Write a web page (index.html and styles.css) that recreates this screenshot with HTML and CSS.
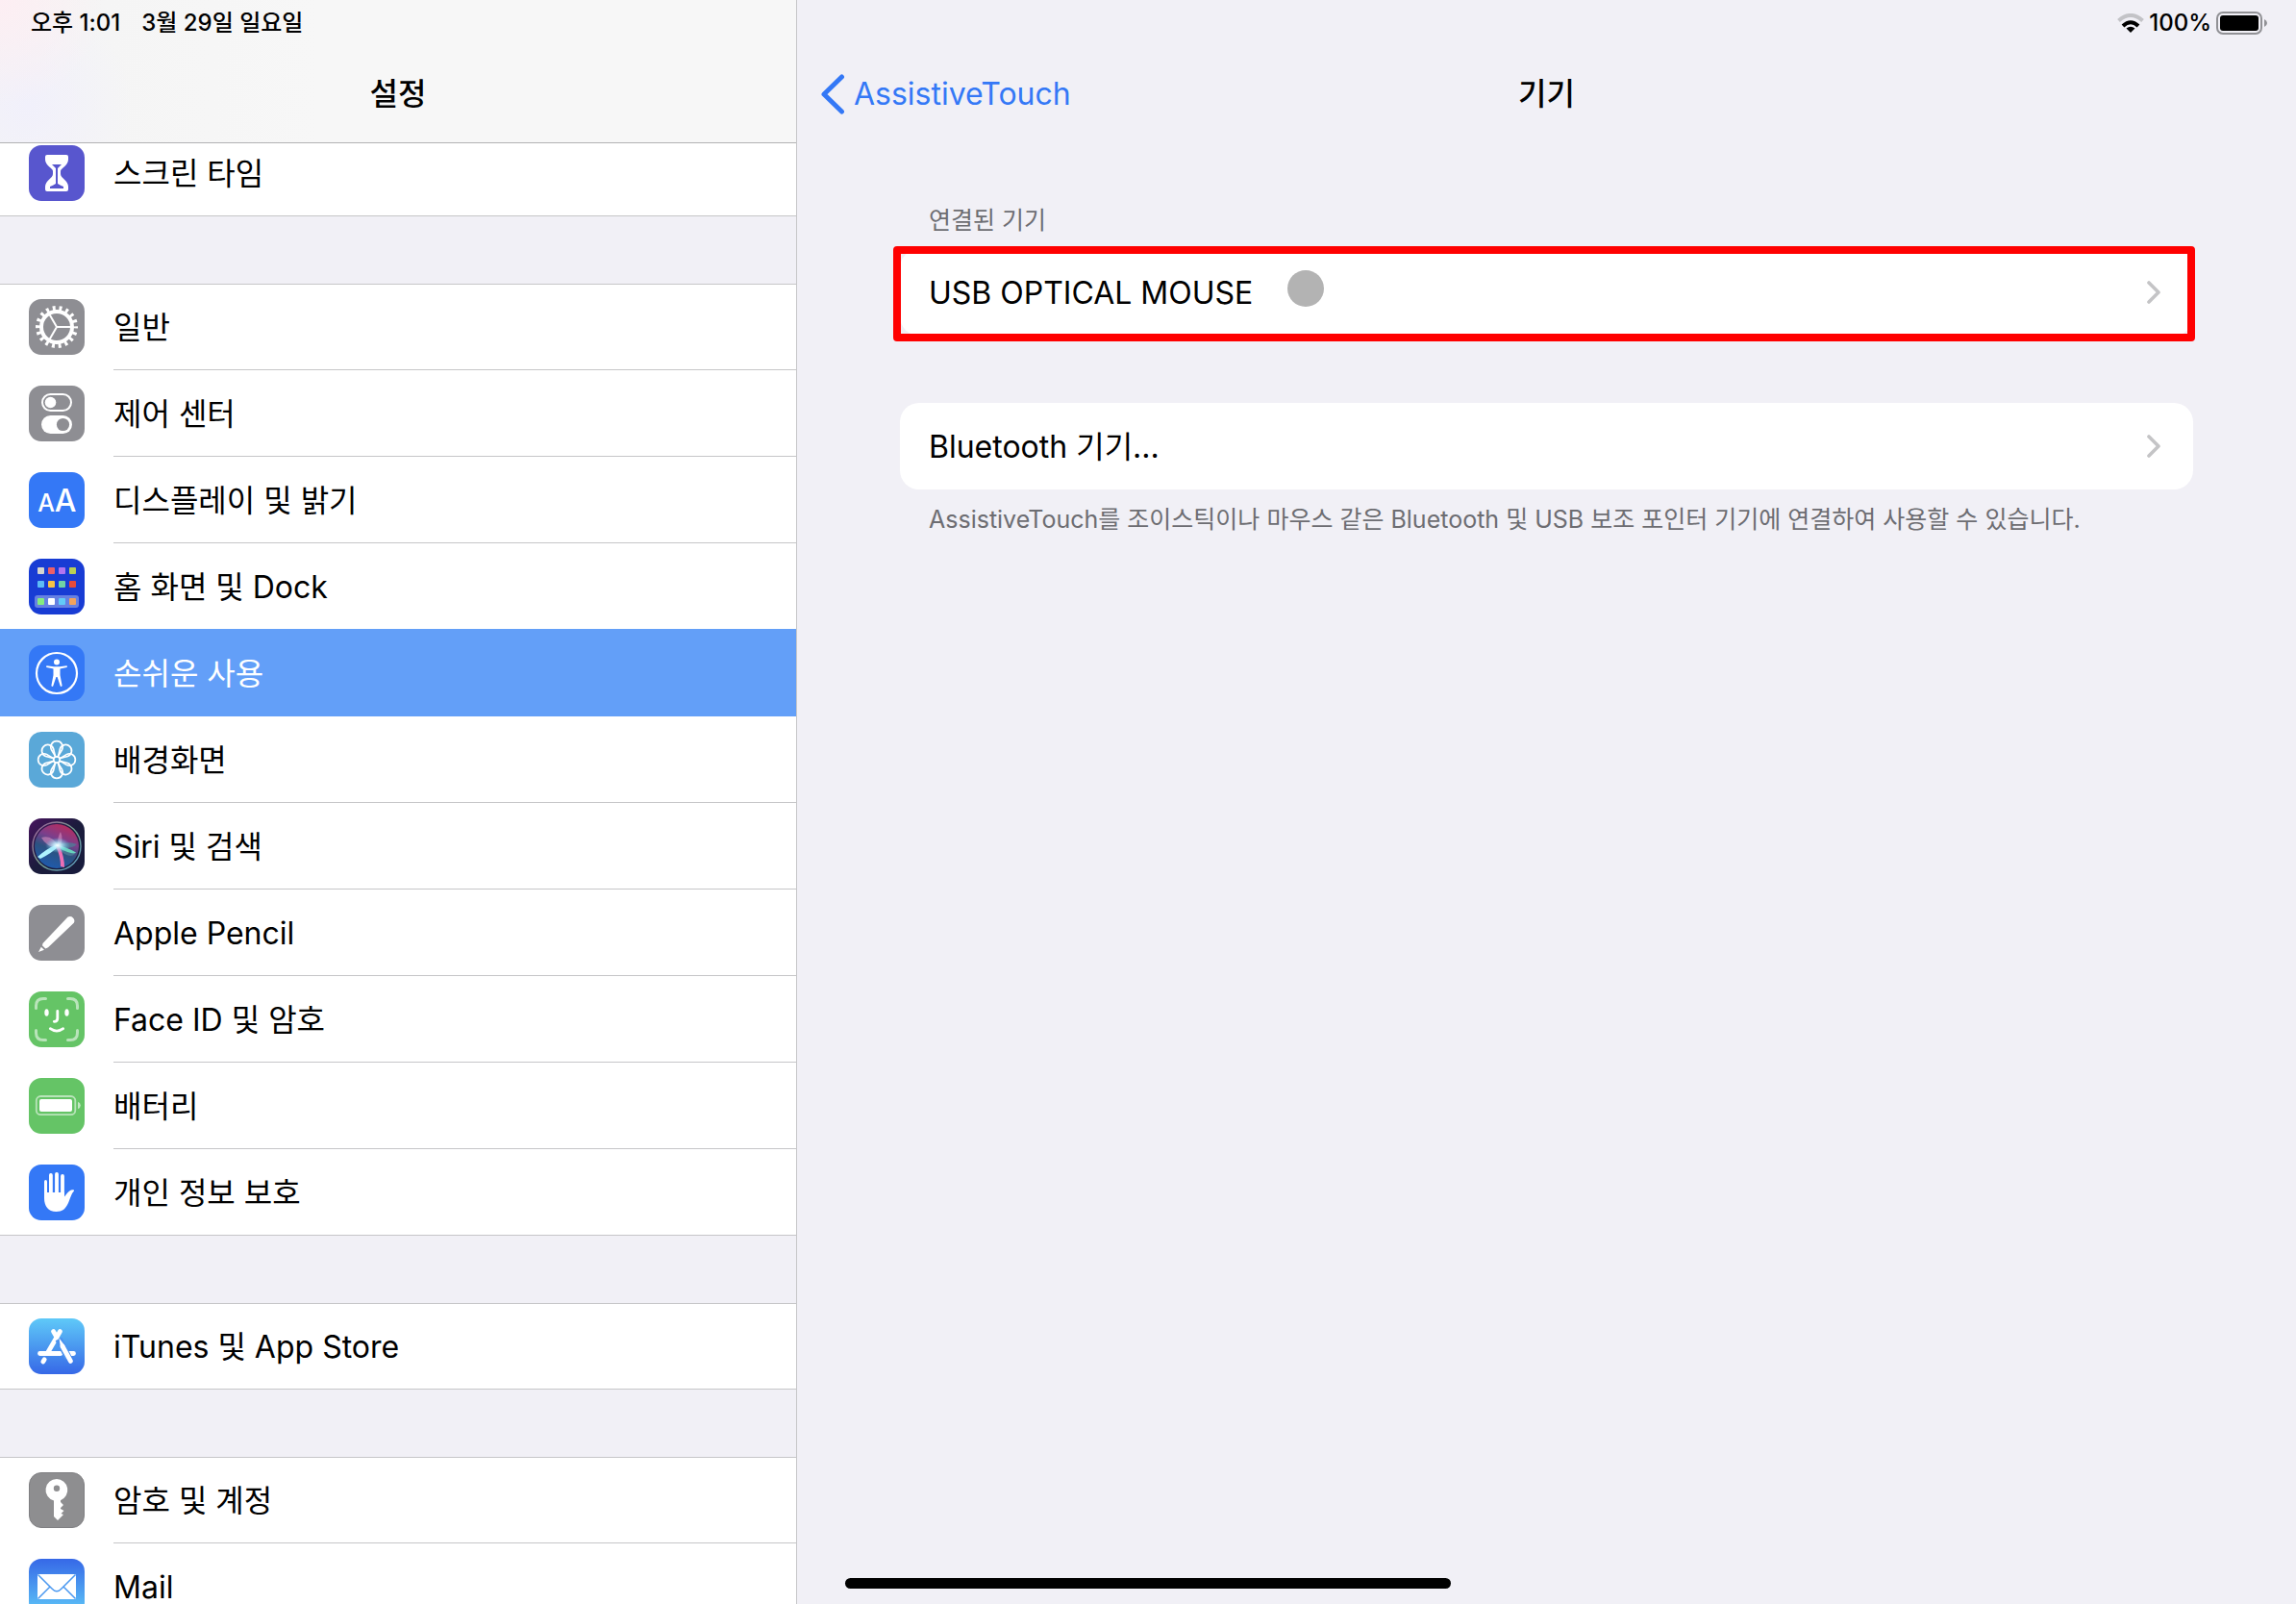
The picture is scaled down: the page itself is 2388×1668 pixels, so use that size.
FILE: index.html
```html
<!DOCTYPE html>
<html lang="ko">
<head>
<meta charset="utf-8">
<meta name="viewport" content="width=device-width, initial-scale=1">
<title>설정</title>
<link rel="stylesheet" href="styles.css">
</head>
<body>
<div class="app">
  <aside class="sidebar">
    <header class="sidebar-header">
      <div class="status"><span>오후 1:01</span><span>3월 29일 일요일</span></div>
      <h1 class="title">설정</h1>
    </header>
    <nav class="menu">
      <ul class="group">
        <li><a class="row" href="#screen-time">
          <svg class="icon" viewBox="0 0 58 58"><rect width="58" height="58" rx="13" fill="#5856ce"/><path fill="#fff" d="M19 10H39Q41 10 41 12V15C41 21 33 24 33 27V30C33 34 41 37 41 43V46Q41 48 39 48H19Q17 48 17 46V43C17 37 25 34 25 30V27C25 24 17 21 17 15V12Q17 10 19 10Z"/><path fill="#5856ce" d="M24 20H34L30 24V40Q33 42 36 43V45H22V43Q25 42 28 40V24Z"/><path stroke="#fff" stroke-width="1" d="M27.500 25V39M30.500 25V39"/></svg>
          <span class="label">스크린 타임</span></a></li>
      </ul>
      <ul class="group">
        <li><a class="row" href="#general">
          <svg class="icon" viewBox="0 0 58 58"><rect width="58" height="58" rx="13" fill="#8e8e93"/><g fill="none" stroke="#fff"><circle cx="29" cy="29" r="16" stroke-width="4"/><circle cx="29" cy="29" r="19.5" stroke-width="5" stroke-dasharray="2.9 3.907" stroke-dashoffset="1.45"/><path stroke-width="2" d="M29 29H44M29 29L21.500 16M29 29L21.500 42"/></g></svg>
          <span class="label">일반</span></a></li>
        <li><a class="row" href="#control-center">
          <svg class="icon" viewBox="0 0 58 58"><rect width="58" height="58" rx="13" fill="#8e8e93"/><rect x="14" y="9" width="30" height="17" rx="8.500" fill="none" stroke="#fff" stroke-width="2"/><circle cx="22.500" cy="17.500" r="5.800" fill="#fff"/><rect x="13" y="31" width="32" height="19" rx="9.500" fill="#fff"/><circle cx="35.500" cy="40.500" r="6.600" fill="#8e8e93"/></svg>
          <span class="label">제어 센터</span></a></li>
        <li><a class="row" href="#display">
          <svg class="icon" viewBox="0 0 58 58"><rect width="58" height="58" rx="13" fill="#3478f6"/><g class="glyph-text" fill="#fff" text-anchor="middle"><text x="18" y="41" font-size="25">A</text><text x="38" y="41" font-size="32">A</text></g></svg>
          <span class="label">디스플레이 및 밝기</span></a></li>
        <li><a class="row" href="#home-dock">
          <svg class="icon" viewBox="0 0 58 58"><rect width="58" height="58" rx="13" fill="#183cd4"/><rect x="6" y="38" width="46" height="13" rx="3" fill="#6680e2"/><g><rect x="9" y="9" width="7" height="7" rx="1" fill="#d5d5d0"/><rect x="20" y="9" width="7" height="7" rx="1" fill="#ec5f67"/><rect x="31" y="9" width="7" height="7" rx="1" fill="#b174f0"/><rect x="42" y="9" width="7" height="7" rx="1" fill="#b9cf55"/><rect x="9" y="23" width="7" height="7" rx="1" fill="#5cbcf6"/><rect x="20" y="23" width="7" height="7" rx="1" fill="#f7c245"/><rect x="31" y="23" width="7" height="7" rx="1" fill="#70d3a5"/><rect x="42" y="23" width="7" height="7" rx="1" fill="#e64b3b"/><rect x="9" y="41" width="7" height="7" rx="1" fill="#85ec7f"/><rect x="20" y="41" width="7" height="7" rx="1" fill="#fff"/><rect x="31" y="41" width="7" height="7" rx="1" fill="#62cbf8"/><rect x="42" y="41" width="7" height="7" rx="1" fill="#f1a25c"/></g></svg>
          <span class="label">홈 화면 및 Dock</span></a></li>
        <li><a class="row selected" href="#accessibility" aria-current="page">
          <svg class="icon" viewBox="0 0 58 58"><rect width="58" height="58" rx="13" fill="#3478f6"/><circle cx="29" cy="29" r="21" fill="none" stroke="#fff" stroke-width="2.200"/><circle cx="29" cy="17.600" r="3" fill="#fff"/><path fill="#fff" d="M18.500 21.200L26 22.200H32L39.500 21.200Q40.500 22.200 39.500 23L32.500 24.500V31L34.600 42Q34 43.400 32.800 42.600L29.600 33H28.400L25.200 42.600Q24 43.400 23.400 42L25.500 31V24.500L18.500 23Q17.500 22.200 18.500 21.200Z"/></svg>
          <span class="label">손쉬운 사용</span></a></li>
        <li><a class="row" href="#wallpaper">
          <svg class="icon" viewBox="0 0 58 58"><defs><path id="petal" d="M28 26L23.400 18.500A6.200 6.200 0 1 1 34.600 18.500L30 26"/></defs><rect width="58" height="58" rx="13" fill="#5aa8d8"/><g fill="none" stroke="#fff" stroke-width="1.700"><circle cx="29" cy="29" r="3.200"/><use href="#petal"/><use href="#petal" transform="rotate(45 29 29)"/><use href="#petal" transform="rotate(90 29 29)"/><use href="#petal" transform="rotate(135 29 29)"/><use href="#petal" transform="rotate(180 29 29)"/><use href="#petal" transform="rotate(225 29 29)"/><use href="#petal" transform="rotate(270 29 29)"/><use href="#petal" transform="rotate(315 29 29)"/></g></svg>
          <span class="label">배경화면</span></a></li>
        <li><a class="row" href="#siri">
          <svg class="icon" viewBox="0 0 58 58"><defs><linearGradient id="siri-bg" x1="0" y1="0" x2="1" y2="1"><stop offset="0" stop-color="#47145e"/><stop offset=".5" stop-color="#1b1c3c"/><stop offset="1" stop-color="#171b3c"/></linearGradient><linearGradient id="siri-orb" x1=".7" y1="0" x2=".3" y2="1"><stop offset="0" stop-color="#b92b5d"/><stop offset=".35" stop-color="#7b3f8c"/><stop offset=".6" stop-color="#2c5280"/><stop offset="1" stop-color="#1e5bb0"/></linearGradient><linearGradient id="siri-ring" x1="0" y1="0" x2="1" y2="1"><stop offset="0" stop-color="#a25c9e"/><stop offset=".5" stop-color="#77a08f"/><stop offset="1" stop-color="#5a9cc6"/></linearGradient><radialGradient id="siri-glow"><stop offset="0" stop-color="#fff"/><stop offset=".3" stop-color="#c4f3ff" stop-opacity=".85"/><stop offset="1" stop-color="#61c8ed" stop-opacity="0"/></radialGradient></defs><rect width="58" height="58" rx="13" fill="url(#siri-bg)"/><circle cx="29" cy="29" r="23" fill="url(#siri-orb)"/><circle cx="29" cy="29" r="25" fill="none" stroke="url(#siri-ring)" stroke-width="1.400"/><path fill="#d98cc0" opacity=".6" d="M13 20Q24 17 30 28Q30 18 33 14Q37 23 31 30Q19 31 13 20Z"/><path fill="#4b8398" opacity=".7" d="M30 28Q41 23 50 27Q46 32 31 31L48 37Q41 43 29 30Z"/><path fill="#6cebc8" opacity=".85" d="M30 28Q40 30 49 35.500Q47 39 29 30Z"/><path fill="#aef3ff" d="M29 27Q18 32 9 40L12 42Q24 36 31 29Z"/><path fill="#ed6fb5" d="M28 29Q33 39 33 50L37 51Q37 40 32 29Z"/><ellipse cx="30" cy="28" rx="13" ry="8" fill="url(#siri-glow)"/></svg>
          <span class="label">Siri 및 검색</span></a></li>
        <li><a class="row" href="#pencil">
          <svg class="icon" viewBox="0 0 58 58"><rect width="58" height="58" rx="13" fill="#8e8e93"/><path fill="#fff" d="M14.500 40L40.600 12.600A4.600 4.600 0 0 1 46.800 18.800L20 44.300L17.300 45.400L14 42.200ZM12.800 43.800L16 46.700L10 49Z"/></svg>
          <span class="label">Apple Pencil</span></a></li>
        <li><a class="row" href="#face-id">
          <svg class="icon" viewBox="0 0 58 58"><rect width="58" height="58" rx="13" fill="#65c466"/><g fill="none" stroke="#fff" stroke-linecap="round" stroke-width="3"><path opacity=".55" d="M7.500 17.500V15Q7.500 7.500 15 7.500H17.500M40.500 7.500H43Q50.500 7.500 50.500 15V17.500M50.500 40.500V43Q50.500 50.500 43 50.500H40.500M17.500 50.500H15Q7.500 50.500 7.500 43V40.500"/><path stroke-width="2.800" d="M29.800 20.500V28Q29.800 31.300 26.300 31.300M22.300 38.700Q29 43.500 35.700 38.700"/></g><ellipse cx="18.500" cy="22" rx="2.200" ry="3.800" fill="#fff"/><ellipse cx="39.500" cy="22" rx="2.200" ry="3.800" fill="#fff"/></svg>
          <span class="label">Face ID 및 암호</span></a></li>
        <li><a class="row" href="#battery">
          <svg class="icon" viewBox="0 0 58 58"><rect width="58" height="58" rx="13" fill="#65c466"/><rect x="7.800" y="19" width="40.500" height="19.200" rx="4.500" fill="none" stroke="#fff" stroke-width="1.800" opacity=".55"/><rect x="11" y="22" width="34" height="13" rx="2" fill="#fff"/><path fill="#fff" opacity=".6" d="M51 24.800Q53.800 26 53.800 28.500T51 32.200Z"/></svg>
          <span class="label">배터리</span></a></li>
        <li><a class="row" href="#privacy">
          <svg class="icon" viewBox="0 0 58 58"><rect width="58" height="58" rx="13" fill="#3478f6"/><g stroke="#fff" stroke-linecap="round" fill="none"><path stroke-width="3" d="M17.500 17.500V32"/><path stroke-width="3.800" d="M22.900 11V32M29 10V32M35 12V32"/></g><path fill="#fff" d="M16 29H37V33.500C39 31 41 27.500 44 26.500Q47.500 25.600 47 27.400C44 30 43 36 40.500 41C38 46 35 49 28.500 49C20 49 16 43 16 35Z"/></svg>
          <span class="label">개인 정보 보호</span></a></li>
      </ul>
      <ul class="group">
        <li><a class="row" href="#store">
          <svg class="icon" viewBox="0 0 58 58"><defs><linearGradient id="sky" x1="0" y1="0" x2="0" y2="1"><stop offset="0" stop-color="#5fc9f8"/><stop offset="1" stop-color="#3668e7"/></linearGradient></defs><rect width="58" height="58" rx="13" fill="url(#sky)"/><g fill="none" stroke-linecap="round"><path stroke="#fff" stroke-width="4.800" d="M11.500 36.500H33M41 36.500H46.500M25.500 13.500L29 19.500M16.200 42.800L14.800 45"/><path stroke="#fff" stroke-width="4.800" d="M32.500 13.500L20 35"/><path stroke="#4a92ef" stroke-width="7.500" stroke-linecap="butt" d="M31 21.500L41 41"/><path stroke="#fff" stroke-width="4.800" d="M43.500 44.500L35 29"/><path fill="#fff" stroke="none" d="M31.500 20.500L37.500 28.500L33 31Z"/></g></svg>
          <span class="label">iTunes 및 App Store</span></a></li>
      </ul>
      <ul class="group">
        <li><a class="row" href="#accounts">
          <svg class="icon" viewBox="0 0 58 58"><rect x=".5" y=".5" width="57" height="57" rx="12.500" fill="#8e8e90" stroke="#7f7f82"/><path fill="#fff" fill-rule="evenodd" d="M29 7A11.500 11.500 0 0 1 33 29.200V31L36 34L33 37V38L36.500 40L33.500 43L36 44L30 50L26 46V29.600A11.500 11.500 0 0 1 29 7ZM29 13.500A3.200 3.200 0 1 0 29 19.900A3.200 3.200 0 1 0 29 13.500Z"/></svg>
          <span class="label">암호 및 계정</span></a></li>
        <li><a class="row" href="#mail">
          <svg class="icon" viewBox="0 0 58 58"><defs><linearGradient id="dusk" x1="0" y1="0" x2="0" y2="1"><stop offset="0" stop-color="#3668e7"/><stop offset="1" stop-color="#5fc9f8"/></linearGradient></defs><rect width="58" height="58" rx="13" fill="url(#dusk)"/><rect x="9" y="16" width="40" height="26" rx="1" fill="#fff"/><path fill="none" stroke="#4a98f0" stroke-width="1.500" d="M9.500 16.500L24 31Q29 36.500 34 31L48.500 16.500M9.500 41.500L21.500 29.500M48.500 41.500L36.500 29.500"/></svg>
          <span class="label">Mail</span></a></li>
      </ul>
    </nav>
  </aside>

  <main class="detail">
    <div class="status status-end">
      <svg class="wifi" viewBox="0 0 28 20" role="img" aria-label="Wi-Fi"><g fill="none"><path stroke="#c3c3c7" stroke-width="4" d="M1.500 7.500Q14 -3.500 26.500 7.500"/><path stroke="#000" stroke-width="4" d="M6 13Q14 5.500 22 13"/></g><path d="M9.500 15.500Q14 12 18.500 15.500L14 20Z"/></svg>
      <span>100%</span>
      <svg class="cell" viewBox="0 0 54 24" role="img" aria-label="배터리"><rect x="1" y="1" width="46" height="22" rx="6" fill="none" stroke="#919195" stroke-width="2"/><rect x="4" y="4" width="40" height="16" rx="3"/><path fill="#919195" d="M50 8Q53 9.500 53 12T50 16Z"/></svg>
    </div>
    <header class="navbar">
      <a class="back" href="#assistive-touch"><svg class="back-arrow" viewBox="0 0 26 42"><path fill="none" stroke="#3478f6" stroke-width="5" stroke-linecap="round" stroke-linejoin="round" d="M22.500 3L4 21L22.500 39"/></svg>AssistiveTouch</a>
      <h2 class="title">기기</h2>
    </header>
    <div class="content">
      <section>
        <h3 class="note">연결된 기기</h3>
        <div class="card marked">
          <a class="cell-row" href="#usb-mouse"><span>USB OPTICAL MOUSE</span><svg class="chevron" viewBox="0 0 14 24"><path fill="none" stroke="#c4c4c6" stroke-width="3.600" stroke-linecap="round" stroke-linejoin="round" d="M2 2L12 12L2 22"/></svg></a>
          <span class="pointer"></span>
        </div>
      </section>
      <section>
        <div class="card">
          <a class="cell-row" href="#bluetooth"><span>Bluetooth 기기...</span><svg class="chevron" viewBox="0 0 14 24"><path fill="none" stroke="#c4c4c6" stroke-width="3.600" stroke-linecap="round" stroke-linejoin="round" d="M2 2L12 12L2 22"/></svg></a>
        </div>
        <p class="note">AssistiveTouch를 조이스틱이나 마우스 같은 Bluetooth 및 USB 보조 포인터 기기에 연결하여 사용할 수 있습니다.</p>
      </section>
    </div>
  </main>
  <div class="home-bar"></div>
</div>
</body>
</html>
```
FILE: styles.css
```css
* { box-sizing: border-box; }

body {
  margin: 0;
  background: #f1f0f6;
  color: #000;
  font-family: Inter, "Noto Sans CJK KR", sans-serif;
  font-size: 32px;
  line-height: 40px;
}

a { color: inherit; text-decoration: none; }
h1, h2, h3, p, ul { margin: 0; padding: 0; }
ul { list-style: none; }
svg { display: block; flex: none; }

.app {
  position: relative;
  display: grid;
  grid-template-columns: minmax(320px, 829fr) minmax(0, 1559fr);
  height: 100vh;
  overflow: hidden;
}

.status {
  display: flex;
  align-items: center;
  gap: 22px;
  height: 48px;
  padding: 0 32px;
  font-size: 24px;
  font-weight: 500;
  line-height: 48px;
}

.status-end {
  justify-content: flex-end;
  gap: 5px;
  padding: 0 29px;
}

.wifi { width: 28px; height: 20px; }
.cell { width: 54px; height: 24px; }

.title {
  font-size: 32px;
  font-weight: 500;
  line-height: 40px;
  text-align: center;
}

/* Sidebar */
.sidebar {
  display: flex;
  flex-direction: column;
  min-height: 0;
  border-right: 1px solid #c6c6c8;
}

.sidebar-header {
  z-index: 1;
  flex: none;
  height: 149px;
  border-bottom: 1px solid #b2b2b4;
  background:
    radial-gradient(circle at 0 0, #fdeef3, rgba(253, 238, 243, 0) 110px),
    radial-gradient(circle at 30px 110px, #f1f0fb, rgba(241, 240, 251, 0) 110px),
    linear-gradient(90deg, #f4f4f4, #f7f7f7 40%);
}

.sidebar-header .title { padding-top: 30px; }

/* The list is scrolled slightly beneath the header */
.menu {
  display: flex;
  flex-direction: column;
  gap: 70px;
  min-height: 0;
  margin-top: -14px;
}

.group {
  flex: none;
  background: #fff;
  box-shadow: inset 0 1px #c6c6c8, inset 0 -1px #c6c6c8;
}

.row {
  display: flex;
  align-items: stretch;
  gap: 30px;
  height: 90px;
  padding-left: 30px;
}

.row .icon { width: 58px; height: 58px; margin-top: 16px; }

.row .label {
  flex: 1;
  padding: 26px 0 23px;
  border-bottom: 1px solid #c6c6c8;
  white-space: nowrap;
}

/* Positioned so that its fill covers the separator above */
.row.selected {
  position: relative;
  background: #639ff8;
  box-shadow: 0 -1px #639ff8;
  color: #fff;
}

.row.selected .label, .group li:last-child .label { border-color: transparent; }

.glyph-text { font-family: Inter, sans-serif; font-weight: 500; }

/* Detail pane */
.detail { min-width: 0; }

.navbar {
  display: grid;
  grid-template-columns: 1fr auto 1fr;
  align-items: center;
  height: 100px;
  padding: 0 24px;
}

.back {
  display: flex;
  align-items: center;
  gap: 9px;
  color: #3478f6;
}

.back-arrow { width: 26px; height: 42px; }

.content {
  display: flex;
  flex-direction: column;
  gap: 70px;
  padding: 65px 107px 0;
}

.note {
  padding: 0 30px;
  color: #6d6d72;
  font-size: 25px;
  font-weight: 400;
  line-height: 32px;
}

h3.note { padding-bottom: 14px; }
p.note { padding-top: 15px; }

.card {
  position: relative;
  border-radius: 20px;
  background: #fff;
}

.cell-row {
  display: flex;
  align-items: center;
  justify-content: space-between;
  height: 90px;
  padding: 0 34px 0 30px;
}

.cell-row span { padding-top: 2px; }

.chevron { width: 14px; height: 24px; }

.marked::after {
  content: "";
  position: absolute;
  inset: -3px -2px -6px -7px;
  border: 8px solid #f00;
  border-radius: 4px;
}

.pointer {
  position: absolute;
  top: 22px;
  left: 403px;
  width: 38px;
  height: 38px;
  border-radius: 50%;
  background: #b3b3b3;
}

.home-bar {
  position: absolute;
  bottom: 16px;
  left: 50%;
  width: 630px;
  height: 11px;
  margin-left: -315px;
  border-radius: 6px;
  background: #000;
}
```
